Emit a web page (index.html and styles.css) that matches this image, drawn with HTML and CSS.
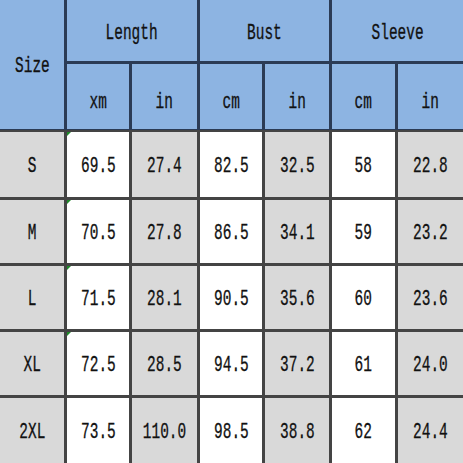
FILE: index.html
```html
<!DOCTYPE html>
<html>
<head>
<meta charset="utf-8">
<link rel="stylesheet" href="styles.css">
</head>
<body>
<div class="chart">
  <div class="cell head size"><span>Size</span></div>
  <div class="cell head group g1"><span>Length</span></div>
  <div class="cell head group g2"><span>Bust</span></div>
  <div class="cell head group g3"><span>Sleeve</span></div>
  <div class="cell head unit"><span>xm</span></div>
  <div class="cell head unit"><span>in</span></div>
  <div class="cell head unit"><span>cm</span></div>
  <div class="cell head unit"><span>in</span></div>
  <div class="cell head unit"><span>cm</span></div>
  <div class="cell head unit"><span>in</span></div>

  <div class="cell gray"><span>S</span></div>
  <div class="cell white mark"><span>69.5</span></div>
  <div class="cell gray"><span>27.4</span></div>
  <div class="cell white"><span>82.5</span></div>
  <div class="cell gray"><span>32.5</span></div>
  <div class="cell white"><span>58</span></div>
  <div class="cell gray"><span>22.8</span></div>

  <div class="cell gray"><span>M</span></div>
  <div class="cell white mark"><span>70.5</span></div>
  <div class="cell gray"><span>27.8</span></div>
  <div class="cell white"><span>86.5</span></div>
  <div class="cell gray"><span>34.1</span></div>
  <div class="cell white"><span>59</span></div>
  <div class="cell gray"><span>23.2</span></div>

  <div class="cell gray"><span>L</span></div>
  <div class="cell white mark"><span>71.5</span></div>
  <div class="cell gray"><span>28.1</span></div>
  <div class="cell white"><span>90.5</span></div>
  <div class="cell gray"><span>35.6</span></div>
  <div class="cell white"><span>60</span></div>
  <div class="cell gray"><span>23.6</span></div>

  <div class="cell gray"><span>XL</span></div>
  <div class="cell white mark"><span>72.5</span></div>
  <div class="cell gray"><span>28.5</span></div>
  <div class="cell white"><span>94.5</span></div>
  <div class="cell gray"><span>37.2</span></div>
  <div class="cell white"><span>61</span></div>
  <div class="cell gray"><span>24.0</span></div>

  <div class="cell gray"><span>2XL</span></div>
  <div class="cell white"><span>73.5</span></div>
  <div class="cell gray"><span>110.0</span></div>
  <div class="cell white"><span>98.5</span></div>
  <div class="cell gray"><span>38.8</span></div>
  <div class="cell white"><span>62</span></div>
  <div class="cell gray"><span>24.4</span></div>
</div>
</body>
</html>
```
FILE: styles.css
```css
html, body {
  margin: 0;
  padding: 0;
  background: #ffffff;
}
.chart {
  width: 463px;
  height: 463px;
  display: grid;
  grid-template-columns: 64px 62px 65px 62px 64px 63px 65px;
  grid-template-rows: 61px 65px 65px 63px 63px 63px 65px;
  gap: 3px;
  background: linear-gradient(#2b3b55 0, #2b3b55 130px, #444444 130px);
  font-family: "Liberation Mono", "DejaVu Sans Mono", monospace;
  font-size: 17px;
  font-weight: normal;
  color: #111;
  -webkit-text-stroke: 0.25px #111;
}
.cell {
  position: relative;
  display: flex;
  align-items: center;
  justify-content: center;
  padding-top: 4px;
  box-sizing: border-box;
}
.cell span {
  display: inline-block;
  transform: scaleX(0.85) scaleY(1.25);
  white-space: nowrap;
}
.head { background: #8db4e2; }
.size { grid-row: 1 / span 2; grid-column: 1; padding-top: 3px; }
.g1 { grid-column: 2 / span 2; }
.g2 { grid-column: 4 / span 2; }
.g3 { grid-column: 6 / span 2; }
.group { padding-top: 6px; }
.unit { padding-top: 11px; }
.gray { background: #d9d9d9; }
.white { background: #ffffff; }
.mark::before {
  content: "";
  position: absolute;
  left: 0;
  top: 0;
  width: 0;
  height: 0;
  border-top: 4px solid #1f8a2a;
  border-right: 4px solid transparent;
}
```
